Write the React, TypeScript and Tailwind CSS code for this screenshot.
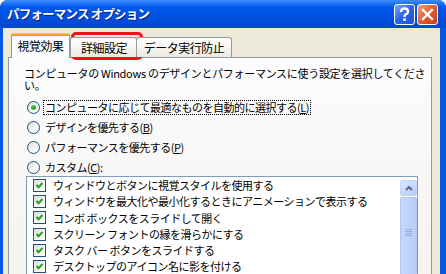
import React from 'react'

const jp = { fontFamily: '"Noto Sans CJK JP", "Noto Sans", sans-serif' }

const Mn = ({ c }: { c: string }) => <span className="underline underline-offset-[1px]">{c}</span>

const TitleButton = ({ kind }: { kind: 'help' | 'close' }) => (
  <div
    className={
      kind === 'help'
        ? 'flex size-[21px] items-center justify-center rounded-[3px] border border-white bg-gradient-to-br from-[#7aa6f8] via-[#2a62e6] to-[#1f52d6]'
        : 'flex size-[21px] items-center justify-center rounded-[3px] border border-white bg-gradient-to-br from-[#f1a07e] via-[#e25a2c] to-[#c8401a]'
    }
  >
    {kind === 'help' ? (
      <svg width="13" height="15" viewBox="0 0 13 15">
        <path d="M3 5 Q3 1.5 6.5 1.5 Q10 1.5 10 4.5 Q10 6.5 7.5 7.5 Q6.5 8 6.5 10" fill="none" stroke="white" strokeWidth="2.4" />
        <rect x="5.2" y="11.3" width="2.6" height="2.6" fill="white" />
      </svg>
    ) : (
      <svg width="13" height="13" viewBox="0 0 13 13">
        <path d="M2 2 L11 11 M11 2 L2 11" stroke="white" strokeWidth="2.4" strokeLinecap="square" />
      </svg>
    )}
  </div>
)

const Radio = ({ checked }: { checked?: boolean }) => (
  <div className="flex size-[13px] shrink-0 items-center justify-center rounded-full border border-[#1c5180] bg-gradient-to-br from-[#dcdcd5] via-[#f4f4f0] to-white">
    {checked && <div className="size-[5px] rounded-full bg-gradient-to-br from-[#5fd35f] to-[#1e901e]" />}
  </div>
)

const Check = () => (
  <div className="flex size-[13px] shrink-0 items-center justify-center border border-[#1c5180] bg-gradient-to-br from-[#dcdcd5] via-[#f4f4f0] to-white">
    <svg width="9" height="9" viewBox="0 0 9 9">
      <path d="M1.5 4 L3.5 6.2 L7.5 2" fill="none" stroke="#21a121" strokeWidth="2" />
    </svg>
  </div>
)

const radios = [
  { label: 'コンピュータに応じて最適なものを自動的に選択する', key: 'L', checked: true },
  { label: 'デザインを優先する', key: 'B' },
  { label: 'パフォーマンスを優先する', key: 'P' },
  { label: 'カスタム', key: 'C', colon: true },
]

const items = [
  'ウィンドウとボタンに視覚スタイルを使用する',
  'ウィンドウを最大化や最小化するときにアニメーションで表示する',
  'コンボ ボックスをスライドして開く',
  'スクリーン フォントの縁を滑らかにする',
  'タスク バー ボタンをスライドする',
  'デスクトップのアイコン名に影を付ける',
]

export default function App() {
  return (
    <div
      className="relative flex h-[274px] w-[446px] flex-col overflow-hidden rounded-t-[8px] bg-[#0556e4] text-[11px] tracking-[-0.5px] text-black"
      style={jp}
    >
      {/* title bar */}
      <div className="flex h-[28px] shrink-0 items-center bg-gradient-to-b from-[#3d8cfb] via-[#0058ee] via-[25%] to-[#0248d0] pl-[7px] pr-[8px]">
        <span className="text-[12.5px] font-bold tracking-[-0.8px] text-white [text-shadow:1px_1px_0_#0a1e8c]">
          パフォーマンス オプション
        </span>
        <div className="ml-auto flex gap-[2px]">
          <TitleButton kind="help" />
          <TitleButton kind="close" />
        </div>
      </div>

      {/* body */}
      <div className="ml-[3px] mr-[6px] flex flex-1 flex-col bg-[#ece9d8] pl-[5px] pr-[8px] pt-[5px]">
        {/* tabs */}
        <div className="relative z-10 flex h-[24px] shrink-0 items-end pl-[3px]">
          <div className="-mb-px flex h-[25px] w-[59px] flex-col overflow-hidden rounded-t-[3px] border-x border-[#919b9c] bg-[#fcfcfe]">
            <div className="h-[3px] bg-gradient-to-b from-[#ffc83c] to-[#e68b2c]" />
            <div className="flex flex-1 items-center justify-center pb-[3px] text-[12px]">視覚効果</div>
          </div>
          <div className="flex h-[20px] w-[67px] items-center justify-center rounded-t-[3px] border border-b-0 border-[#919b9c] bg-gradient-to-b from-white to-[#eceae3] pl-px text-[12px]">
            詳細設定
          </div>
          <div className="-ml-px flex h-[20px] w-[96px] items-center justify-center rounded-t-[3px] border border-b-0 border-[#919b9c] bg-gradient-to-b from-white to-[#eceae3] text-[12px]">
            データ実行防止
          </div>
        </div>

        {/* panel */}
        <div className="flex flex-1 flex-col border border-[#919b9c] bg-gradient-to-b from-[#fcfcfe] to-[#f4f3ee] pl-[15px] pr-[13px] pt-[9px]">
          <div className="flex h-[26px] flex-col leading-[12px] tracking-[-0.3px]">
            <div className="whitespace-nowrap">コンピュータの Windows のデザインとパフォーマンスに使う設定を選択してくださ</div>
            <div className="whitespace-nowrap">い。</div>
          </div>

          <div className="mt-[4px] flex flex-col">
            {radios.map((r) => (
              <div key={r.key} className="flex h-[20px] items-center gap-[4px] pl-[3px]">
                <Radio checked={r.checked} />
                <span
                  className={
                    r.checked
                      ? 'whitespace-nowrap px-px leading-[13px] outline outline-1 outline-dotted outline-black'
                      : 'whitespace-nowrap px-px leading-[13px]'
                  }
                >
                  {r.label}(<Mn c={r.key} />){r.colon ? ':' : ''}
                </span>
              </div>
            ))}
          </div>

          {/* list box */}
          <div className="ml-[2px] mt-[-1px] flex flex-1 border border-[#7f9db9] bg-white">
            <div className="flex flex-1 flex-col pl-[6px]">
              {items.map((t) => (
                <div key={t} className="flex h-[16.3px] shrink-0 items-center gap-[7px]">
                  <Check />
                  <span className="whitespace-nowrap">{t}</span>
                </div>
              ))}
            </div>
            <div className="flex w-[17px] flex-col gap-px bg-[#fdfdfb] pt-[3px]">
              <div className="flex h-[16px] items-center justify-center rounded-[2px] border border-[#c3d3fd] bg-gradient-to-br from-[#dbe6fe] to-[#b5cbf7]">
                <svg width="8" height="5" viewBox="0 0 8 5">
                  <path d="M1 4 L4 1 L7 4" fill="none" stroke="#4d6185" strokeWidth="1.8" />
                </svg>
              </div>
              <div className="flex flex-1 flex-col items-center rounded-[2px] border border-[#b0c4f3] bg-gradient-to-r from-[#c9d8fc] to-[#b8cdf8] pt-[31px]">
                <div className="flex flex-col gap-px">
                  <div className="h-px w-[7px] bg-[#8caef0]" />
                  <div className="h-px w-[7px] bg-[#8caef0]" />
                  <div className="h-px w-[7px] bg-[#8caef0]" />
                  <div className="h-px w-[7px] bg-[#8caef0]" />
                </div>
              </div>
            </div>
          </div>
        </div>
      </div>

      {/* annotation around the 詳細設定 tab */}
      <div className="absolute left-[71px] top-[32px] h-[28px] w-[72px] rounded-[5px] border-[3px] border-[#e8141a]" />
    </div>
  )
}
